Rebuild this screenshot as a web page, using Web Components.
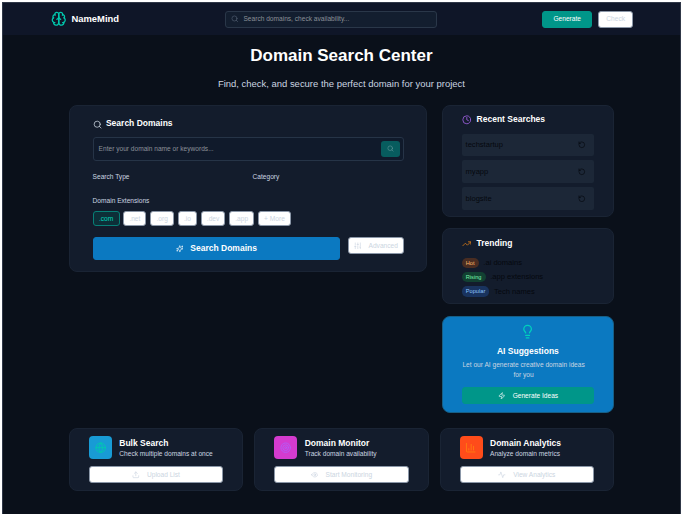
<!DOCTYPE html>
<html lang="en">
<head>
<meta charset="utf-8">
<title>NameMind - Domain Search Center</title>
<style>
html,body{margin:0;height:516px;background:#fff;overflow:hidden}
body{font-family:"Liberation Sans",Arial,sans-serif;font-size:6.6px;line-height:9.5px;color:#000}
.cols{display:grid;grid-template-columns:358px 172px;column-gap:15px;width:545px;margin:0 0 0 66.4px}
.side{display:flex;flex-direction:column;gap:11.3px}
.bottom{display:grid;grid-template-columns:repeat(3,174.2px);gap:11.2px;margin:15.4px 0 0 66.4px}
</style>
</head>
<body>
<name-mind-app>
  <app-header></app-header>
  <page-hero><span slot="title">Domain Search Center</span><span slot="sub">Find, check, and secure the perfect domain for your project</span></page-hero>
  <div class="cols">
    <search-panel></search-panel>
    <div class="side">
      <recent-searches></recent-searches>
      <trending-list></trending-list>
      <ai-suggestions></ai-suggestions>
    </div>
  </div>
  <div class="bottom">
    <tool-card icon="globe" action="upload" label="Upload List" style="--tile:#189bd5;--ink:#00c9b0">Bulk Search<span slot="sub">Check multiple domains at once</span></tool-card>
    <tool-card icon="target" action="eye" label="Start Monitoring" style="--tile:#d43bcf;--ink:#b45cf5">Domain Monitor<span slot="sub">Track domain availability</span></tool-card>
    <tool-card icon="chart" action="activity" label="View Analytics" style="--tile:#ff4c1a;--ink:#ff7a12">Domain Analytics<span slot="sub">Analyze domain metrics</span></tool-card>
  </div>
</name-mind-app>
<script>
const ICONS = {
  brain:'<path d="M12 5a3 3 0 1 0-5.997.125 4 4 0 0 0-2.526 5.77 4 4 0 0 0 .556 6.588A4 4 0 1 0 12 18Z"/><path d="M12 5a3 3 0 1 1 5.997.125 4 4 0 0 1 2.526 5.77 4 4 0 0 1-.556 6.588A4 4 0 1 1 12 18Z"/><path d="M15 13a4.5 4.5 0 0 1-3-4 4.5 4.5 0 0 1-3 4M17.6 6.5a3 3 0 0 0 .4-1.4M6 5.1a3 3 0 0 0 .4 1.4M3.5 10.9a4 4 0 0 1 .6-.4M19.9 10.5a4 4 0 0 1 .6.4M6 18a4 4 0 0 1-2-.5M20 17.5a4 4 0 0 1-2 .5"/>',
  search:'<circle cx="11" cy="11" r="8"/><path d="m21 21-4.3-4.3"/>',
  clock:'<circle cx="12" cy="12" r="10"/><path d="M12 6v6l4 2"/>',
  rotate:'<path d="M3 12a9 9 0 1 0 9-9 9.75 9.75 0 0 0-6.74 2.74L3 8"/><path d="M3 3v5h5"/>',
  trend:'<path d="m22 7-8.5 8.5-5-5L2 17"/><path d="M16 7h6v6"/>',
  bulb:'<path d="M15 14c.2-1 .7-1.7 1.5-2.5 1-.9 1.5-2.2 1.5-3.5A6 6 0 0 0 6 8c0 1 .2 2.2 1.5 3.5.7.7 1.3 1.5 1.5 2.5M9 18h6M10 22h4"/>',
  zap:'<path d="M4 14a1 1 0 0 1-.8-1.6l9.9-10.2a.5.5 0 0 1 .9.5l-2 6A1 1 0 0 0 13 10h7a1 1 0 0 1 .8 1.6l-9.9 10.2a.5.5 0 0 1-.9-.5l2-6A1 1 0 0 0 11 14z"/>',
  sparkle:'<path d="M9.900 15.500A2 2 0 0 0 8.500 14.100L2.400 12.500a.5.5 0 0 1 0-1L8.500 9.900A2 2 0 0 0 9.900 8.500l1.600-6.100a.5.5 0 0 1 1 0L14.100 8.500a2 2 0 0 0 1.400 1.400l6.100 1.600a.5.5 0 0 1 0 1l-6.100 1.600a2 2 0 0 0-1.400 1.400l-1.600 6.100a.5.5 0 0 1-1 0zM20 3v4M22 5h-4M4 17v2M5 18H3"/>',
  sliders:'<path d="M4 21v-7M4 10V3M12 21v-9M12 8V3M20 21v-5M20 12V3M2 14h4M10 8h4M18 16h4"/>',
  globe:'<circle cx="12" cy="12" r="10"/><path d="M12 2a14.5 14.5 0 0 0 0 20 14.5 14.5 0 0 0 0-20M2 12h20"/>',
  target:'<circle cx="12" cy="12" r="10"/><circle cx="12" cy="12" r="6"/><circle cx="12" cy="12" r="2"/>',
  chart:'<path d="M3 3v16a2 2 0 0 0 2 2h16M18 17V9M13 17V5M8 17v-3"/>',
  upload:'<path d="M21 15v4a2 2 0 0 1-2 2H5a2 2 0 0 1-2-2v-4M17 8l-5-5-5 5M12 3v12"/>',
  eye:'<path d="M2 12s3.500-7 10-7 10 7 10 7-3.500 7-10 7-10-7-10-7Z"/><circle cx="12" cy="12" r="3"/>',
  activity:'<path d="M22 12h-4l-3 9L9 3l-3 9H2"/>'
};
const define = (tag, render) => customElements.define(tag, class extends HTMLElement {
  connectedCallback() {
    if (this.shadowRoot) return;
    this.attachShadow({mode:'open'}).innerHTML = render(this);
  }
});

define('ui-icon', el => `<style>:host{display:block;flex:none;width:var(--s,7.6px);height:var(--s,7.6px)}svg{display:block;width:100%;height:100%;fill:none;stroke:currentColor;stroke-width:2;stroke-linecap:round;stroke-linejoin:round}</style><svg viewBox="0 0 24 24">${ICONS[el.getAttribute('name')]}</svg>`);

define('ui-button', () => `<style>
:host{display:flex;box-sizing:border-box;align-items:center;justify-content:center;height:17px;border-radius:3px;white-space:nowrap;background:#fff;border:.5px solid #8b97a8;color:#cbd5e1;gap:7.4px}
:host([kind=teal]){background:#009689;border-color:#009689;color:#fff}
:host([kind=blue]){background:#0b79c1;border-color:#0b79c1;color:#fff;height:23px;font-size:8.5px;font-weight:bold}
:host([kind=active]){background:#0d2f38;border:1px solid #077f76;color:#00d5be}
</style><slot></slot>`);

define('ui-card', () => `<style>:host{display:block;box-sizing:border-box;height:100%;border:1px solid #1a2434;border-radius:8px;background:#131c2c}</style><slot></slot>`);

define('card-title', () => `<style>:host{display:flex;align-items:center;height:12px;color:#fff;font-weight:bold;font-size:8.5px;gap:5.4px}</style><slot></slot>`);

define('name-mind-app', () => `<style>:host{display:block;box-sizing:border-box;width:679.6px;height:511.8px;margin:2px 0 0 1.6px;background:#0a101a;border:solid #303848;border-width:1px 1px 0 .5px}</style><slot></slot>`);

define('app-header', () => `<style>
:host{display:flex;box-sizing:border-box;height:32px;align-items:center;background:#0f1628;padding-left:48.400px}
.brand{display:flex;align-items:center;gap:4.900px;color:#fff;font-size:9.44px;font-weight:bold;width:174.200px}
.brand ui-icon{--s:15.500px;color:#00c9ae}
.box{box-sizing:border-box;display:flex;align-items:center;gap:5.200px;width:212px;height:17px;border:1px solid #2a3749;border-radius:3px;background:#131e2f;padding-left:4.500px;color:#8b9098;margin-right:105px}
.box ui-icon{color:#546174}
.gen{width:50px;margin-right:6px}.chk{width:35px}
</style><div class="brand"><ui-icon name="brain"></ui-icon>NameMind</div><div class="box"><ui-icon name="search"></ui-icon>Search domains, check availability...</div><ui-button class="gen" kind="teal">Generate</ui-button><ui-button class="chk">Check</ui-button>`);

define('page-hero', () => `<style>:host{display:block;height:69.700px;text-align:center;box-sizing:border-box;padding-top:10.500px}
h1{margin:0;font-size:17px;line-height:20px;color:#fff}p{margin:11.500px 0 0;font-size:9.46px;line-height:14px;color:#cbd5e1}</style><h1><slot name="title"></slot></h1><p><slot name="sub"></slot></p>`);

define('search-panel', () => `<style>
:host{display:block;height:167px}
ui-card{padding:12.500px 22.200px 0 22.600px}
card-title ui-icon{--s:9.200px;color:#cbd5e1}card-title{gap:4.200px}
.field{display:flex;box-sizing:border-box;align-items:center;justify-content:space-between;height:23.600px;margin-top:7px;border:1px solid #263447;border-radius:3px;background:#101a2b;color:#8b9098;padding:0 2.800px 0 5px}
.go{display:grid;place-items:center;width:19.200px;height:15.200px;border-radius:3px;background:#075c5e;color:#65979b}
.go ui-icon{--s:7px}
.labels{display:grid;grid-template-columns:160px 1fr;margin-top:11px;color:#cbd5e1}
.label{margin-top:15.200px;color:#cbd5e1}
.chips{display:flex;margin-top:4.800px;gap:3.800px}
.chips ui-button{height:15.500px}
.actions{display:flex;gap:7.500px;margin-top:11px}
.actions ui-button[kind=blue]{width:247.500px;gap:7px}
.adv{flex:1}
</style><ui-card><card-title><ui-icon name="search"></ui-icon>Search Domains</card-title>
<div class="field"><span>Enter your domain name or keywords...</span><div class="go"><ui-icon name="search"></ui-icon></div></div>
<div class="labels"><span>Search Type</span><span>Category</span></div>
<div class="label">Domain Extensions</div>
<div class="chips">${[['.com',27],['.net',23],['.org',24],['.io',19],['.dev',24.6],['.app',25],['+ More',33]].map(([t,w],i)=>`<ui-button ${i?'':'kind="active"'} style="width:${w}px">${t}</ui-button>`).join('')}</div>
<div class="actions"><ui-button kind="blue"><ui-icon name="sparkle"></ui-icon><span>Search Domains</span></ui-button><ui-button class="adv"><ui-icon name="sliders"></ui-icon><span>Advanced</span></ui-button></div></ui-card>`);

define('recent-searches', () => `<style>:host{display:block;height:112.500px}ui-card{padding:8.200px 18.700px 0 18.600px}card-title ui-icon{--s:9.600px;color:#a463e8}
.item{display:flex;align-items:center;justify-content:space-between;height:22.600px;background:#1c2737;margin-top:4px;border-radius:2px;padding:0 8.500px 0 4px;font-size:7.55px;color:#05080e}
card-title{margin-bottom:8px}</style><ui-card><card-title><ui-icon name="clock"></ui-icon>Recent Searches</card-title>${['techstartup','myapp','blogsite'].map(t=>`<div class="item"><span>${t}</span><ui-icon name="rotate"></ui-icon></div>`).join('')}</ui-card>`);

define('trending-list', () => `<style>:host{display:block;height:76px}ui-card{padding:8.500px 18.600px}card-title{margin-bottom:7.600px}card-title ui-icon{--s:9.600px;color:#d97b16}
.row{display:flex;align-items:center;height:10.600px;margin-bottom:3.600px;font-size:7.55px;color:#05080e;gap:4.600px}
.row b{box-sizing:border-box;font-weight:normal;font-size:5.66px;height:10.600px;line-height:10.600px;border-radius:5px;padding:0 4.200px}
.hot{background:#492d22;color:#ffb86a}.rising{background:#124132;color:#7bf1a8}.popular{background:#19335e;color:#8ec5ff}</style><ui-card><card-title><ui-icon name="trend"></ui-icon>Trending</card-title>${[['Hot','.ai domains'],['Rising','.app extensions'],['Popular','Tech names']].map(([a,t])=>`<div class="row"><b class="${a.toLowerCase()}">${a}</b><span>${t}</span></div>`).join('')}</ui-card>`);

define('ai-suggestions', () => `<style>:host{display:block;height:97.300px}ui-card{display:flex;flex-direction:column;align-items:center;background:#0b79c1;border-color:#175f86;padding:7px 18.800px 7px 18.600px;text-align:center;color:#cbd5e1}
ui-card>ui-icon{--s:15.200px;color:#00d0bd}h3{font-size:8.5px;line-height:12px;margin:6px 0 3.500px;color:#fff}p{align-self:flex-start;margin:0 0 7.700px;line-height:9.5px;font-size:6.62px;width:124px}ui-button{align-self:stretch}</style><ui-card><ui-icon name="bulb"></ui-icon><h3>AI Suggestions</h3><p>Let our AI generate creative domain ideas for you</p><ui-button kind="teal"><ui-icon name="zap"></ui-icon><span>Generate Ideas</span></ui-button></ui-card>`);

define('tool-card', el => `<style>:host{display:block;height:63px}ui-card{padding:6.800px 19px 0 18.800px}
.top{display:flex;gap:7.500px;margin-bottom:7.200px}.tile{display:grid;place-items:center;width:23px;height:23px;border-radius:4px;background:var(--tile);color:var(--ink)}.tile ui-icon{--s:11.400px}
h3{margin:1px 0 0;font-size:8.5px;line-height:12px;color:#fff}p{margin:0;font-size:6.6px;line-height:9.5px;color:#cbd5e1}</style><ui-card><div class="top"><div class="tile"><ui-icon name="${el.getAttribute('icon')}"></ui-icon></div><div><h3><slot></slot></h3><p><slot name="sub"></slot></p></div></div><ui-button><ui-icon name="${el.getAttribute('action')}"></ui-icon><span>${el.getAttribute('label')}</span></ui-button></ui-card>`);
</script>
</body>
</html>
